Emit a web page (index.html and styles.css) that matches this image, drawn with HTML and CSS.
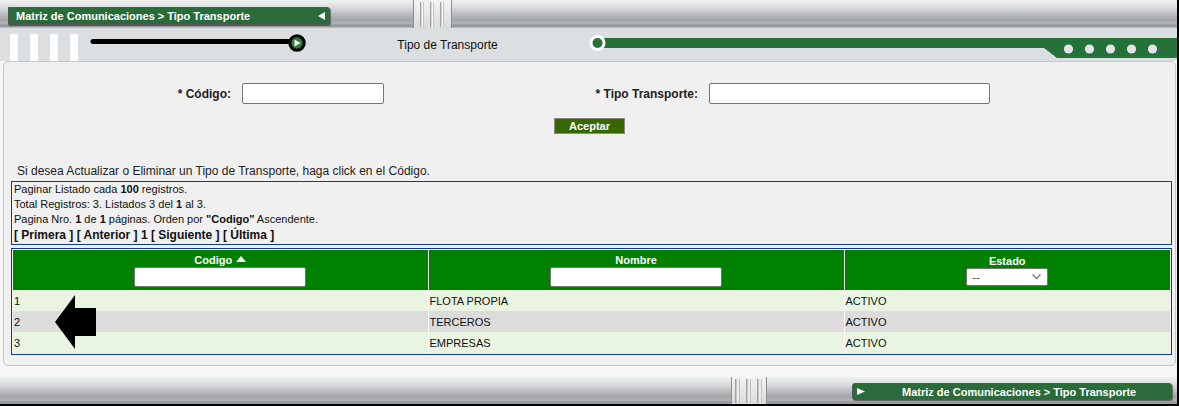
FILE: index.html
```html
<!DOCTYPE html>
<html lang="es">
<head>
<meta charset="utf-8">
<title>Tipo Transporte</title>
<link rel="stylesheet" href="styles.css">
</head>
<body>
<div class="frame">
  <header class="bar bar-top">
    <div class="tab tab-top">
      <span class="tab-text">Matriz de Comunicaciones &gt; Tipo Transporte</span>
      <svg class="tab-tri" width="7" height="8" viewBox="0 0 7 8"><polygon points="7,0 7,8 0,4" fill="#fff"/></svg>
    </div>
    <div class="grip grip-top"><i></i><i></i><i></i></div>
  </header>

  <div class="subbar">
    <div class="blocks"><i></i><i></i><i></i><i></i></div>
    <svg class="slider" width="217" height="33" viewBox="0 0 217 33">
      <line x1="4" y1="13.5" x2="200" y2="13.5" stroke="#000" stroke-width="5" stroke-linecap="round"/>
      <circle cx="208" cy="15" r="7.2" fill="#2d7a3d" stroke="#000" stroke-width="3"/>
      <polygon points="205.5,11.5 205.5,18.5 211.5,15" fill="#fff"/>
    </svg>
    <div class="sub-title">Tipo de Transporte</div>
    <svg class="band" width="588" height="33" viewBox="0 0 588 33">
      <polygon points="8,10 588,10 588,30 468,30 455,20 8,20" fill="#25713a"/>
      <circle cx="8.5" cy="15" r="6.5" fill="#25713a" stroke="#fff" stroke-width="3"/>
      <circle cx="479.5" cy="21" r="4.6" fill="#e2e4e6"/>
      <circle cx="500.5" cy="21" r="4.6" fill="#e2e4e6"/>
      <circle cx="521.5" cy="21" r="4.6" fill="#e2e4e6"/>
      <circle cx="542.5" cy="21" r="4.6" fill="#e2e4e6"/>
      <circle cx="563.5" cy="21" r="4.6" fill="#e2e4e6"/>
    </svg>
  </div>

  <main class="main">
    <section class="panel">
      <form class="form-row">
        <label class="lbl lbl-code" for="codigo">* Código:</label>
        <input class="txt txt-code" id="codigo" type="text">
        <label class="lbl lbl-tipo" for="tipo">* Tipo Transporte:</label>
        <input class="txt txt-tipo" id="tipo" type="text">
      </form>
      <button class="btn" type="button">Aceptar</button>

      <p class="info">Si desea Actualizar o Eliminar un Tipo de Transporte, haga click en el Código.</p>

      <div class="box pager">
        <div class="pl">Paginar Listado cada <b>100</b> registros.</div>
        <div class="pl">Total Registros: 3. Listados 3 del <b>1</b> al 3.</div>
        <div class="pl">Pagina Nro. <b>1</b> de <b>1</b> páginas. Orden por <b>"Codigo"</b> Ascendente.</div>
        <div class="nav">[ Primera ] [ Anterior ] 1 [ Siguiente ] [ Última ]</div>
      </div>

      <div class="box grid-box">
        <table class="grid">
          <colgroup><col class="c1"><col class="c2"><col class="c3"></colgroup>
          <thead>
            <tr class="head">
              <th><div class="th-t">Codigo <svg class="sort" width="10" height="6" viewBox="0 0 10 6"><polygon points="0,6 10,6 5,0" fill="#fff"/></svg></div><input class="fin" type="text"></th>
              <th><div class="th-t">Nombre</div><input class="fin" type="text"></th>
              <th><div class="th-t th-e">Estado</div><span class="sel"><select class="sel-in"><option>--</option></select><svg class="chev" width="9" height="6" viewBox="0 0 9 6"><polyline points="0.5,0.5 4.5,4.5 8.5,0.5" fill="none" stroke="#777" stroke-width="1.3"/></svg></span></th>
            </tr>
          </thead>
          <tbody>
            <tr class="r odd"><td>1</td><td>FLOTA PROPIA</td><td>ACTIVO</td></tr>
            <tr class="r even"><td>2</td><td>TERCEROS</td><td>ACTIVO</td></tr>
            <tr class="r odd"><td>3</td><td>EMPRESAS</td><td>ACTIVO</td></tr>
          </tbody>
        </table>
        <svg class="arrow" width="42" height="55" viewBox="0 0 42 55"><polygon points="0,27 20,0 20,13 41,13 41,41 20,41 20,54" fill="#000"/></svg>
      </div>
    </section>
  </main>

  <footer class="bar bar-bottom">
    <div class="grip grip-bottom"><i></i><i></i><i></i></div>
    <div class="tab tab-bottom">
      <svg class="tab-tri" width="8" height="7" viewBox="0 0 8 7"><polygon points="0,0 0,7 8,3.5" fill="#fff"/></svg>
      <span class="tab-text">Matriz de Comunicaciones &gt; Tipo Transporte</span>
    </div>
  </footer>
</div>
</body>
</html>
```

FILE: styles.css
```css
html, body {
  margin: 0;
  padding: 0;
  background: #000;
}
body {
  font-family: "Liberation Sans", Arial, sans-serif;
  color: #222;
}
.frame {
  width: 1177px;
  height: 404px;
  background: #f6f6f6;
  overflow: hidden;
  display: flex;
  flex-direction: column;
}

/* silver bars */
.bar {
  display: flex;
  flex: none;
  background: linear-gradient(to bottom,
    #efefef 0px, #e6e7e8 4px, #d3d5d7 9px, #b6b9bc 15px,
    #a2a5a8 20px, #b2b4b6 23px, #8e9194 26px, #c7c9cb 28px);
}
.bar-top { height: 28px; }
.bar-bottom { height: 27px; }

.tab {
  box-sizing: border-box;
  background: #2a6b3a;
  border: 1px solid #555;
  border-radius: 0 3px 3px 0;
  box-shadow: 1px 1px 1px rgba(0, 0, 0, 0.45);
  display: flex;
  align-items: center;
  color: #fff;
  font-weight: bold;
  font-size: 11px;
  white-space: nowrap;
}
.tab-top {
  margin: 7px 0 0 8px;
  width: 322px;
  height: 18px;
  justify-content: space-between;
  padding: 0 4px 0 7px;
}
.tab-bottom {
  margin: 6px 0 0 85px;
  width: 320px;
  height: 17px;
  padding: 0 0 0 4px;
  border-radius: 3px;
}
.tab-bottom .tab-text { margin-left: 37px; }

.grip {
  box-sizing: border-box;
  height: 100%;
  display: flex;
  gap: 6px;
  background: linear-gradient(to bottom, #f2f2f2, #dadcde);
  border-left: 1px solid #8c8f92;
  border-right: 1px solid #8c8f92;
}
.grip i {
  display: block;
  width: 4px;
  margin-top: 2px;
  height: calc(100% - 3px);
  background: linear-gradient(to right, #8b8e91, #ffffff 60%, #a6a9ac);
}
.grip-top {
  margin-left: 83px;
  width: 39px;
  padding-left: 6px;
}
.grip-bottom {
  margin-left: 731px;
  width: 36px;
  padding-left: 3px;
}
.grip-bottom i { width: 5px; }

/* sub bar */
.subbar {
  height: 33px;
  flex: none;
  background: #dcdfe2;
  display: flex;
}
.blocks {
  display: flex;
  gap: 12px;
  padding-left: 10px;
  align-items: flex-end;
}
.blocks i {
  display: block;
  width: 8px;
  height: 27px;
  background: #fff;
}
.slider {
  margin-left: 11px;
  flex: none;
}
.sub-title {
  width: 283px;
  flex: none;
  text-align: center;
  font-size: 12px;
  line-height: 34px;
  color: #111;
}
.band { flex: none; }

/* main */
.main {
  flex: 1;
}
.panel {
  box-sizing: border-box;
  margin-left: 3px;
  width: 1173px;
  height: 305px;
  background: #f0f0f0;
  border: 1px solid #c6c6c6;
  border-radius: 5px;
  position: relative;
}
.form-row {
  display: flex;
  align-items: center;
  margin: 21px 0 0 0;
  height: 21px;
}
.lbl {
  font-size: 12px;
  font-weight: bold;
  color: #222;
  text-align: right;
  margin-right: 11px;
}
.lbl-code { width: 227px; }
.lbl-tipo { width: 314px; }
.txt {
  box-sizing: border-box;
  height: 21px;
  margin: 0;
  border: 1px solid #767676;
  border-radius: 2px;
  background: #fff;
}
.txt-code { width: 142px; }
.txt-tipo { width: 281px; }

.btn {
  display: block;
  box-sizing: border-box;
  margin: 14px auto 0;
  width: 71px;
  height: 16px;
  padding: 0;
  background: #376800;
  border: 1px solid #8a8a8a;
  color: #fff;
  font-family: "Liberation Sans", Arial, sans-serif;
  font-size: 11px;
  font-weight: bold;
  line-height: 13px;
}

.info {
  margin: 30px 0 0 13px;
  font-size: 12px;
  line-height: 14px;
  color: #222;
}

.box {
  box-sizing: border-box;
  margin: 3px 0 0 7px;
  width: 1161px;
  border: 1px solid #113c8e;
}
.pager {
  height: 64px;
  padding: 0 2px;
  font-size: 11px;
  line-height: 15px;
  color: #111;
}
.nav {
  font-size: 12px;
  font-weight: bold;
  line-height: 16px;
}

.grid-box {
  position: relative;
  padding: 1px;
}
.grid {
  width: 100%;
  border-collapse: collapse;
  table-layout: fixed;
  font-size: 11px;
}
.c1 { width: 415px; }
.c2 { width: 416px; }
.head { height: 40px; }
.head th {
  background: #008000;
  color: #fff;
  font-weight: bold;
  vertical-align: top;
  padding: 4px 0 0;
  text-align: center;
}
.head th + th { border-left: 1px solid #fff; }
.th-t {
  line-height: 13px;
  height: 13px;
}
.th-e { margin-top: 1px; }
.sort { vertical-align: 2px; margin-left: 1px; }
.fin {
  display: block;
  box-sizing: border-box;
  margin: 0 auto;
  width: 172px;
  height: 20px;
  border: 1px solid #767676;
  border-radius: 2px;
  background: #fff;
}
.sel {
  display: block;
  position: relative;
  width: 82px;
  height: 18px;
  margin: 0 auto;
}
.sel-in {
  appearance: none;
  -webkit-appearance: none;
  box-sizing: border-box;
  display: block;
  width: 82px;
  height: 18px;
  margin: 0;
  padding: 0 0 0 5px;
  border: 1px solid #767676;
  border-radius: 2px;
  background: #fff;
  color: #444;
  font-family: "Liberation Sans", Arial, sans-serif;
  font-size: 11px;
}
.chev {
  position: absolute;
  right: 7px;
  top: 6px;
}
.r { height: 21px; }
.r td {
  padding: 0 1px;
  color: #111;
  white-space: nowrap;
}
.r td + td { border-left: 1px solid #fafafa; }
.odd { background: #e9f5e1; }
.even { background: #dcdcdc; }

.arrow {
  position: absolute;
  left: 43px;
  top: 46px;
}
```
